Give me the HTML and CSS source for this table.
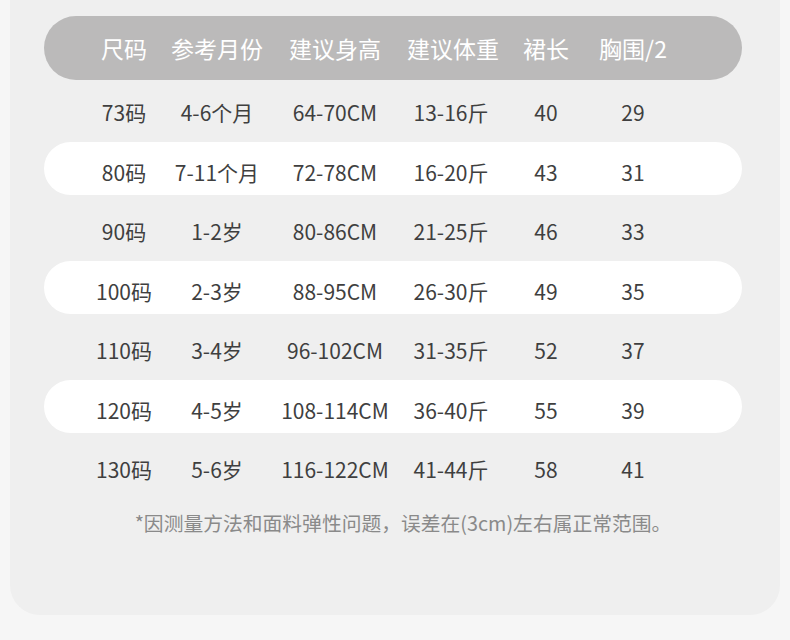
FILE: index.html
```html
<!DOCTYPE html>
<html lang="zh">
<head>
<meta charset="utf-8">
<link rel="stylesheet" href="styles.css">
</head>
<body>
<div class="card">
  <div class="row head">
    <span>尺码</span><span>参考月份</span><span>建议身高</span><span>建议体重</span><span>裙长</span><span>胸围/2</span>
  </div>
  <div class="rows">
    <div class="row"><span>73码</span><span>4-6个月</span><span>64-70CM</span><span>13-16斤</span><span>40</span><span>29</span></div>
    <div class="row alt"><span>80码</span><span>7-11个月</span><span>72-78CM</span><span>16-20斤</span><span>43</span><span>31</span></div>
    <div class="row"><span>90码</span><span>1-2岁</span><span>80-86CM</span><span>21-25斤</span><span>46</span><span>33</span></div>
    <div class="row alt"><span>100码</span><span>2-3岁</span><span>88-95CM</span><span>26-30斤</span><span>49</span><span>35</span></div>
    <div class="row"><span>110码</span><span>3-4岁</span><span>96-102CM</span><span>31-35斤</span><span>52</span><span>37</span></div>
    <div class="row alt"><span>120码</span><span>4-5岁</span><span>108-114CM</span><span>36-40斤</span><span>55</span><span>39</span></div>
    <div class="row"><span>130码</span><span>5-6岁</span><span>116-122CM</span><span>41-44斤</span><span>58</span><span>41</span></div>
  </div>
  <p class="note">*因测量方法和面料弹性问题，误差在(3cm)左右属正常范围。</p>
</div>
</body>
</html>
```
FILE: styles.css
```css
html, body {
  margin: 0;
  padding: 0;
  background: #f6f6f6;
}
body {
  font-family: "Noto Sans CJK SC", "Noto Sans", sans-serif;
  width: 790px;
  height: 640px;
  overflow: hidden;
}
.card {
  margin: 0 10px;
  height: 615px;
  box-sizing: border-box;
  background: #efefef;
  border-radius: 0 0 30px 30px;
  padding: 16px 38px 0 34px;
}
.row {
  display: grid;
  grid-template-columns: 94px 92px 144px 88px 102px 72px;
  padding-left: 33px;
  height: 53px;
  align-items: center;
  border-radius: 27px;
  box-sizing: border-box;
  padding-top: 7px;
  color: #3f3f3f;
  font-size: 21px;
  line-height: 1;
}
.row span {
  text-align: center;
  white-space: nowrap;
}
.row.head {
  height: 64px;
  border-radius: 32px;
  background: #bbbaba;
  color: #ffffff;
  font-size: 23px;
  padding-top: 0;
}
.rows {
  display: flex;
  flex-direction: column;
  gap: 6.5px;
  margin-top: 2.5px;
}
.row.alt {
  background: #ffffff;
}
.note {
  margin: 18px 0 0 20px;
  text-align: center;
  color: #8a8a8a;
  font-size: 19.8px;
  line-height: 24px;
  white-space: nowrap;
}
```
